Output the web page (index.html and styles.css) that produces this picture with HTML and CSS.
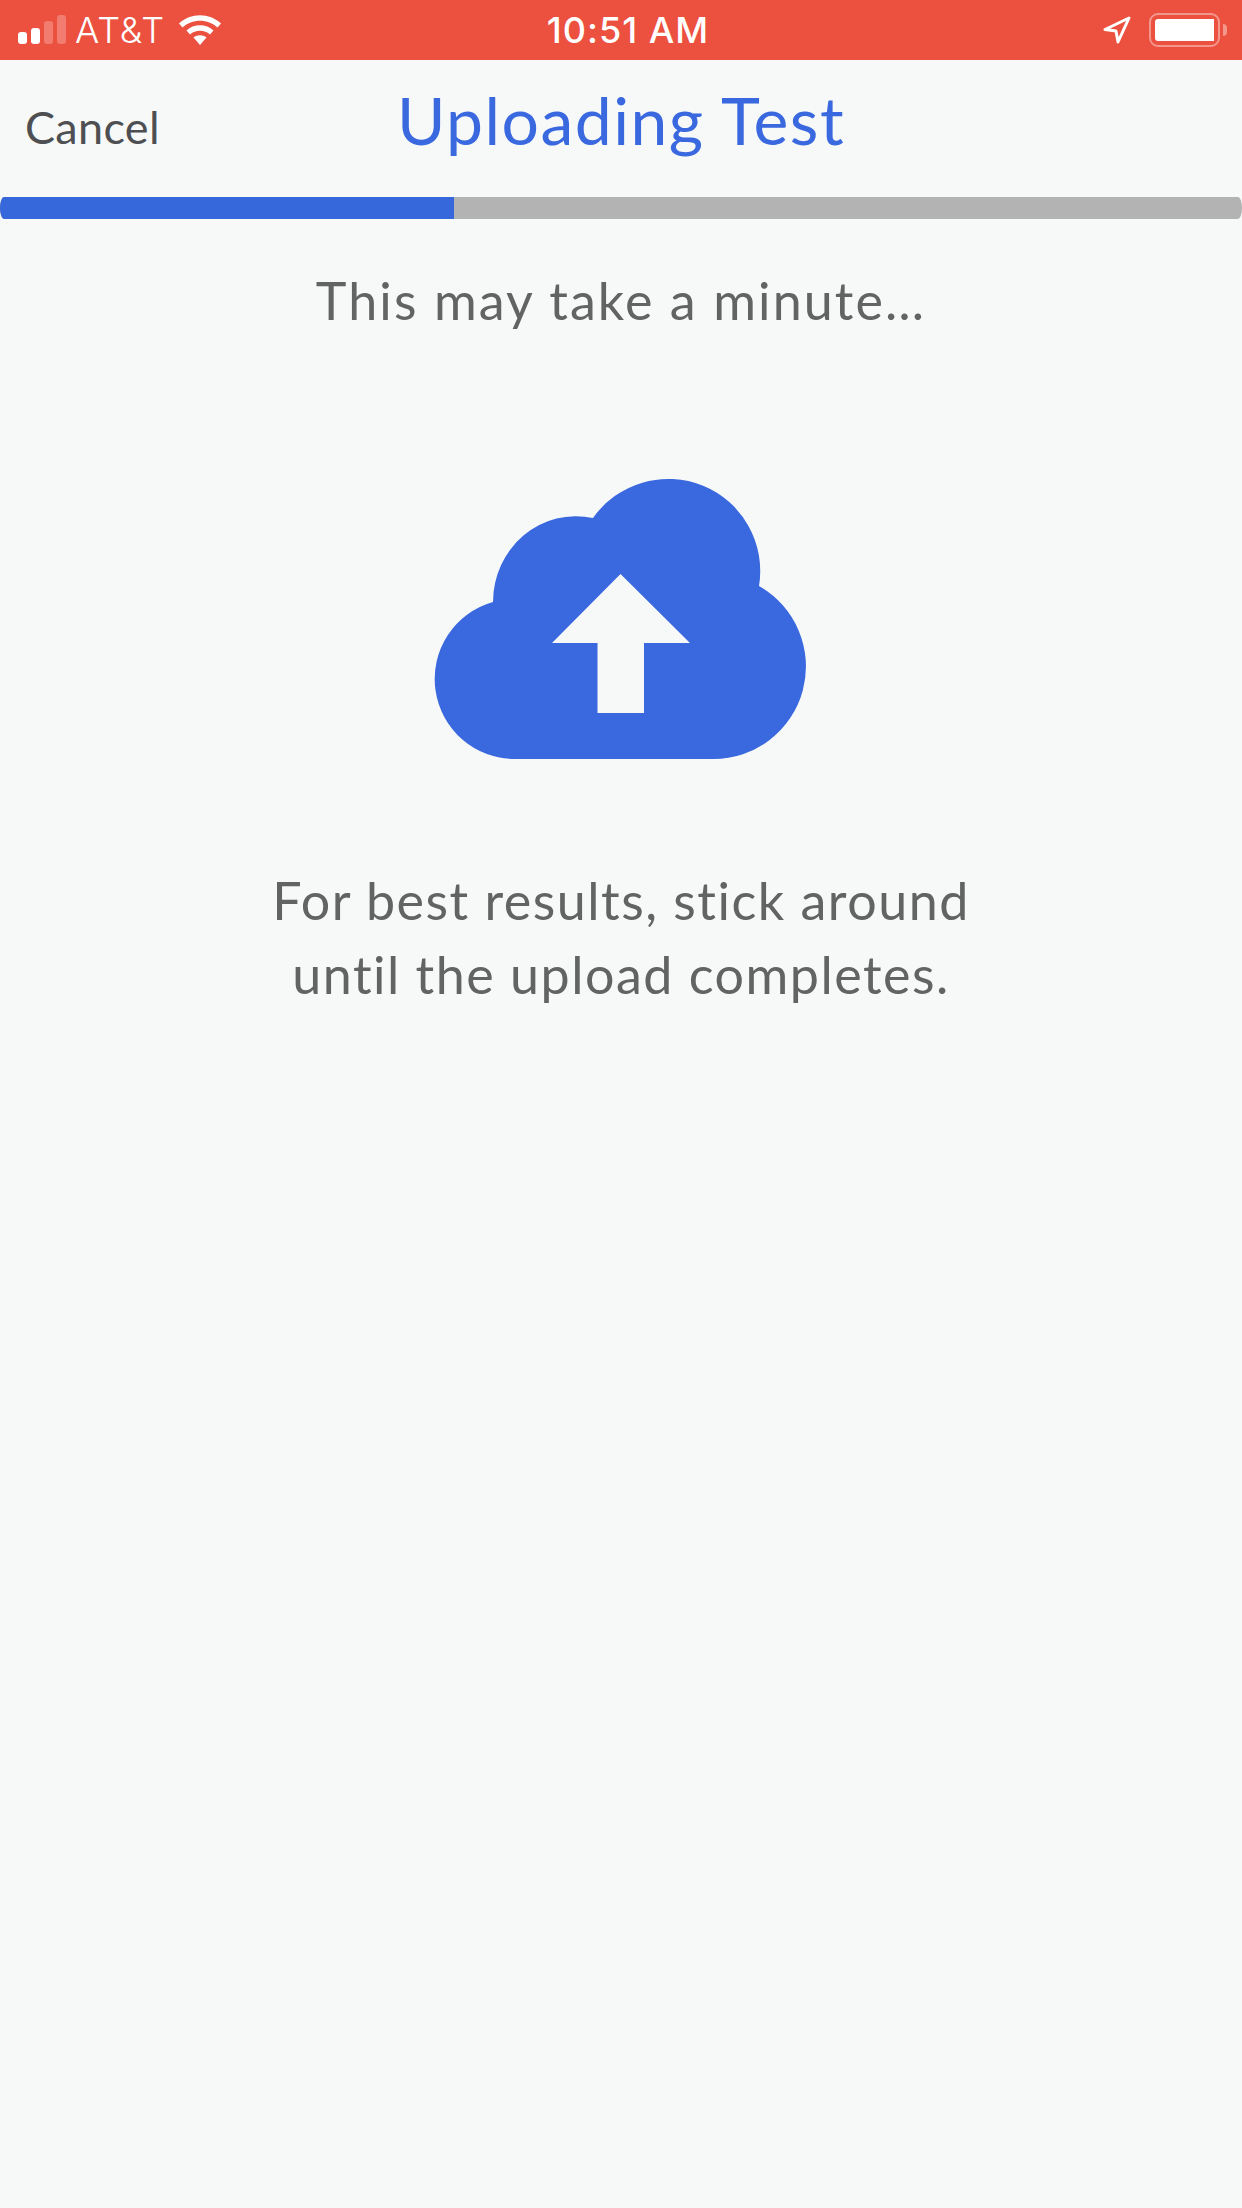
FILE: index.html
```html
<!DOCTYPE html>
<html>
<head>
  <title>Uploading Test</title>
  <link rel="stylesheet" href="styles.css">
</head>
<body>
  <div class="status-bar">
    <div class="status-left">
      <svg class="signal" width="48" height="30" viewBox="0 0 48 30">
        <rect x="0" y="17" width="9" height="12" rx="3" fill="#fff"/>
        <rect x="13" y="13" width="9" height="16" rx="3" fill="#fff"/>
        <rect x="26" y="6" width="9" height="23" rx="3" fill="#fff" opacity="0.25"/>
        <rect x="39" y="0" width="9" height="29" rx="3" fill="#fff" opacity="0.25"/>
      </svg>
      <span class="carrier">AT&amp;T</span>
      <svg class="wifi" width="42" height="30" viewBox="0 0 42 30">
        <path d="M0 8.500C11.500-2.500 30.500-2.500 42 8.500L38.500 12.500C29 3.500 13 3.500 3.500 12.500Z" fill="#fff"/>
        <path d="M7.500 15.500C14.500 8.500 27.500 8.500 34.500 15.500L31 19.500C25.500 14.500 16.500 14.500 11 19.500Z" fill="#fff"/>
        <path d="M14.500 22.500C18 19.500 24 19.500 27.500 22.500L21 30Z" fill="#fff"/>
      </svg>
    </div>
    <div class="status-time">10:51 AM</div>
    <div class="status-right">
      <svg class="location" width="28" height="28" viewBox="0 0 28 28">
        <path d="M26 2L2 13.500L13 15L15 26Z" fill="none" stroke="#fff" stroke-width="3" stroke-linejoin="round"/>
      </svg>
      <div class="battery">
        <div class="battery-level"></div>
      </div>
      <div class="battery-cap"></div>
    </div>
  </div>

  <div class="nav">
    <div class="cancel">Cancel</div>
    <h1 class="title">Uploading Test</h1>
    <div></div>
  </div>

  <div class="progress">
    <div class="progress-fill" style="width: 36.55%"></div>
  </div>

  <div class="content">
    <p class="message wait">This may take a minute…</p>
    <svg class="cloud" width="400" height="320" viewBox="0 0 400 320">
      <path fill-rule="evenodd" fill="#3968df" d="M95 309A80 80 0 0 1 73 152A83 86 0 0 1 173 68A92 92 0 0 1 339 136A92.500 92.500 0 0 1 293 309Z
        M200.500 124L132 193H177.500V263H224V193H270Z"/>
    </svg>
    <p class="message">For best results, stick around<br>until the upload completes.</p>
  </div>
</body>
</html>
```

FILE: styles.css
```css
body {
  margin: 0;
  height: 2208px;
  overflow: hidden;
  background-color: #f7f9f8;
  font-family: 'Lato', 'Open Sans', sans-serif;
  color: #626363;
}

.status-bar {
  height: 60px;
  background-color: #ec503f;
  color: #fff;
  display: grid;
  grid-template-columns: 1fr auto 1fr;
  align-items: center;
  font-family: 'Inter', 'Liberation Sans', sans-serif;
  font-size: 36px;
}

.status-left {
  display: flex;
  align-items: center;
  padding-left: 18px;
}

.carrier {
  margin-left: 9px;
  font-weight: 300;
  letter-spacing: 1px;
}

.wifi {
  margin-left: 14px;
}

.status-time {
  margin-left: 14px;
  font-weight: 500;
  letter-spacing: 1px;
}

.status-right {
  display: flex;
  align-items: center;
  justify-content: flex-end;
  padding-right: 15px;
}

.location {
  margin-right: 18px;
}

.battery {
  box-sizing: border-box;
  width: 71px;
  height: 34px;
  padding: 4px;
  border: 2px solid rgba(255, 255, 255, 0.4);
  border-radius: 9px;
}

.battery-level {
  height: 100%;
  background-color: #fff;
  border-radius: 3px 0 0 3px;
}

.battery-cap {
  width: 4px;
  height: 12px;
  margin-left: 3px;
  background-color: rgba(255, 255, 255, 0.4);
  border-radius: 0 6px 6px 0;
}

.nav {
  height: 137px;
  display: grid;
  grid-template-columns: 1fr auto 1fr;
  align-items: center;
}

.cancel {
  padding-left: 25px;
  padding-bottom: 3px;
  font-size: 45px;
  letter-spacing: 0.3px;
  color: #4d4f52;
}

.title {
  margin: 0 0 18px;
  font-size: 66px;
  font-weight: 400;
  letter-spacing: 1.5px;
  color: #3968df;
}

.progress {
  height: 22px;
  background-color: #b3b3b3;
  border-radius: 4px / 11px;
  overflow: hidden;
}

.progress-fill {
  height: 100%;
  background-color: #3667db;
}

.content {
  display: flex;
  flex-direction: column;
  align-items: center;
}

.message {
  margin: 0;
  font-size: 52px;
  line-height: 74px;
  letter-spacing: 1.5px;
  text-align: center;
}

.wait {
  margin-top: 44px;
  letter-spacing: 2.1px;
}

.cloud {
  margin-top: 113px;
  margin-bottom: 93px;
  margin-left: -2px;
}
```
